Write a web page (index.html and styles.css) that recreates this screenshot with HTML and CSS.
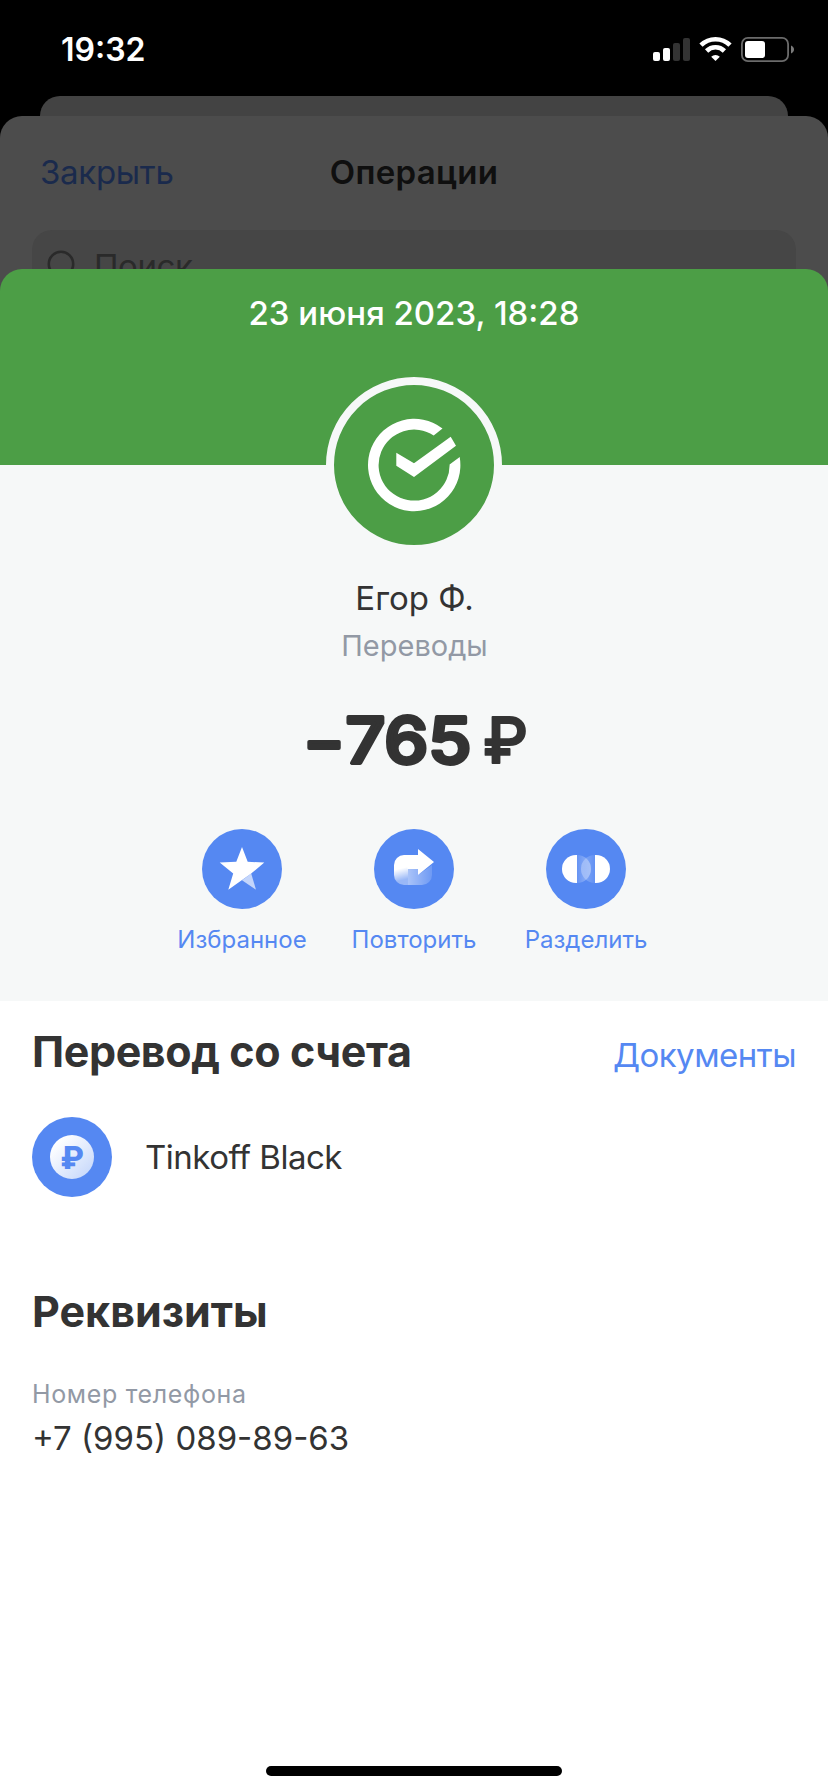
FILE: index.html
```html
<!DOCTYPE html>
<html lang="ru">
<head>
  <meta charset="UTF-8" />
  <meta name="viewport" content="width=device-width, initial-scale=1.0"/>
  <title>Операция</title>
  <link rel="stylesheet" href="styles.css">
</head>
<body>
  <div class="status-bar">
    <span class="time">19:32</span>
    <div class="status-icons">
      <svg width="37" height="26" viewBox="0 0 37 26" fill="#fff">
        <rect x="0" y="16" width="7" height="9" rx="2"/>
        <rect x="10" y="12" width="7" height="13" rx="2"/>
        <rect x="20" y="7" width="7" height="18" rx="2" fill="#333"/>
        <rect x="30" y="2" width="7" height="23" rx="2" fill="#333"/>
      </svg>
      <svg width="33" height="26" viewBox="0 0 33 26">
        <g fill="none" stroke="#fff" stroke-width="4.6">
          <path d="M2 9.2a20.5 20.5 0 0 1 29 0"/>
          <path d="M7.6 15a12.6 12.6 0 0 1 17.8 0"/>
        </g>
        <path d="M16.500 25l-4.300-4.300a6.200 6.200 0 0 1 8.600 0z" fill="#fff"/>
      </svg>
      <svg width="54" height="26" viewBox="0 0 54 26">
        <rect x=".9" y="1.900" width="46.200" height="23.200" rx="6" fill="none" stroke="#6b6b6b" stroke-width="1.800"/>
        <rect x="4" y="5" width="20" height="17" rx="3" fill="#fff"/>
        <path d="M50 9.500c4 1.500 4 6.500 0 8z" fill="#7a7a7a"/>
      </svg>
    </div>
  </div>

  <div class="back-card"></div>
  <div class="sheet">
    <div class="sheet-header">
      <span class="close">Закрыть</span>
      <span class="sheet-title">Операции</span>
      <span></span>
    </div>
    <div class="search">
      <svg width="34" height="34" viewBox="0 0 34 34" fill="none" stroke="#2a2a2a" stroke-width="2.600">
        <circle cx="14" cy="14" r="12.200"/>
        <path d="M23 23l9 9"/>
      </svg>
      <span class="search-text">Поиск</span>
    </div>
  </div>

  <div class="receipt">
    <div class="receipt-top">
      <div class="date">23 июня 2023, 18:28</div>
      <div class="logo">
        <svg width="160" height="160" viewBox="-80 -80 160 160" fill="#fff">
          <path d="M28.500-36.500A46.200 46.200 0 1 0 45.700-8L35.600-.5A35.500 35.500 0 1 1 19.700-29.500z"/>
          <path d="M-17.700-12.300L0-1.700 36.700-28.300 42-19.300 0 12-17.700.7z"/>
        </svg>
      </div>
    </div>

    <div class="summary">
      <div class="name">Егор Ф.</div>
      <div class="category">Переводы</div>
      <svg class="amount" width="240" height="80" viewBox="0 0 240 80">
        <text y="63"><tspan x="9">−</tspan><tspan x="51.500" textLength="126" lengthAdjust="spacingAndGlyphs">765</tspan> <tspan class="currency" x="189">₽</tspan></text>
      </svg>
      <div class="actions">
        <div class="action">
          <svg width="80" height="80" viewBox="-40 -40 80 80">
            <circle r="40" fill="#5588f2"/>
            <path d="M0 11.300L9.200 4.600 14 20.700z" fill="#fff" opacity=".65"/>
            <path d="M0-22L5.700-7.200 22.300-6.500 9.200 4.600 -13.700 20.700 -8.800 4.600 -22.300-6.500 -5.700-7.200z" fill="#fff"/>
          </svg>
          <span class="action-label">Избранное</span>
        </div>
        <div class="action">
          <svg width="80" height="80" viewBox="-40 -40 80 80">
            <defs>
              <linearGradient id="fade" x1="0" y1="0" x2=".12" y2="1">
                <stop offset=".5" stop-color="#fff"/>
                <stop offset=".9" stop-color="#fff" stop-opacity=".4"/>
              </linearGradient>
              <linearGradient id="tail">
                <stop offset="0" stop-color="#fff" stop-opacity=".5"/>
                <stop offset="1" stop-color="#fff" stop-opacity=".15"/>
              </linearGradient>
            </defs>
            <circle r="40" fill="#5588f2"/>
            <path d="M-6 0H4V6L18-4V6a10 10 0 0 1-10 10H-6z" fill="url(#tail)"/>
            <path d="M-6-14H-10A10 10 0 0 0-20-4V6A10 10 0 0 0-10 16H-6z" fill="url(#fade)"/>
            <path d="M-6.500-14H4V-20L20-7 4 6V0H-6.500z" fill="#fff"/>
          </svg>
          <span class="action-label">Повторить</span>
        </div>
        <div class="action">
          <svg width="80" height="80" viewBox="-40 -40 80 80">
            <defs>
              <linearGradient id="left">
                <stop offset="0" stop-color="#fff" stop-opacity=".1"/>
                <stop offset="1" stop-color="#fff" stop-opacity=".4"/>
              </linearGradient>
              <linearGradient id="right">
                <stop offset="0" stop-color="#fff" stop-opacity=".3"/>
                <stop offset="1" stop-color="#fff" stop-opacity=".08"/>
              </linearGradient>
            </defs>
            <circle r="40" fill="#5588f2"/>
            <path d="M-9-14A14 14 0 0 1-9 14z" fill="url(#left)"/>
            <path d="M9-14A14 14 0 0 0 9 14z" fill="url(#right)"/>
            <path d="M-9-14H-10A14 14 0 0 0-10 14H-9z" fill="#fff"/>
            <path d="M9-14H10A14 14 0 0 1 10 14H9z" fill="#fff"/>
          </svg>
          <span class="action-label">Разделить</span>
        </div>
      </div>
    </div>

    <div class="section">
      <div class="section-header">
        <h2>Перевод со счета</h2>
        <span class="documents">Документы</span>
      </div>
      <div class="account">
        <svg width="80" height="80" viewBox="-40 -40 80 80">
          <defs>
            <linearGradient id="coin" x1="0" y1="0" x2="1" y2="1">
              <stop offset=".15" stop-color="#fff"/>
              <stop offset=".9" stop-color="#c8d9fb"/>
            </linearGradient>
          </defs>
          <circle r="40" fill="#5588f2"/>
          <circle r="22" fill="url(#coin)"/>
          <text class="coin-sign" x="0" y="12">₽</text>
        </svg>
        <span class="account-name">Tinkoff Black</span>
      </div>
    </div>

    <div class="section details">
      <h2>Реквизиты</h2>
      <div class="field-label">Номер телефона</div>
      <div class="field-value">+7 (995) 089-89-63</div>
    </div>

    <div class="home-bar"></div>
  </div>
</body>
</html>
```
FILE: styles.css
```css
* {
  box-sizing: border-box;
}
body {
  margin: 0;
  height: 1792px;
  display: flex;
  flex-direction: column;
  background: #000;
  color: #333;
  font-family: Inter, "Liberation Sans", sans-serif;
  font-size: 33px;
  line-height: 44px;
  white-space: nowrap;
  overflow: hidden;
}
svg { display: block; }
h2 {
  margin: 0;
  font-size: 43px;
  line-height: 60px;
  font-weight: 700;
  letter-spacing: -0.4px;
}

.status-bar {
  height: 96px;
  padding: 0 33px 0 61px;
  display: flex;
  justify-content: space-between;
  align-items: flex-start;
}
.time {
  margin-top: 28px;
  color: #fff;
  font-size: 32px;
  font-weight: 600;
}
.status-icons {
  display: flex;
  gap: 9px;
  margin-top: 36px;
}

.back-card {
  height: 20px;
  margin: 0 40px;
  flex-shrink: 0;
  background: #434343;
  border-radius: 20px 20px 0 0;
}
.sheet {
  height: 183px;
  flex-shrink: 0;
  padding: 0 32px;
  overflow: hidden;
  background: #4c4c4c;
  border-radius: 22px 22px 0 0;
}
.sheet-header {
  height: 114px;
  padding: 0 8px 2px;
  display: grid;
  grid-template-columns: 1fr auto 1fr;
  align-items: center;
}
.close {
  color: #1a2a4c;
  letter-spacing: -0.3px;
}
.sheet-title {
  color: #0f0f0f;
  font-weight: 600;
  letter-spacing: 0.3px;
}
.search {
  height: 72px;
  padding: 1px 15px 0;
  display: flex;
  align-items: center;
  gap: 13px;
  background: #464646;
  border-radius: 20px;
  color: #2a2a2a;
}
.search-text {
  margin-top: -1px;
  letter-spacing: -0.4px;
}

.receipt {
  position: relative;
  flex: 1;
  margin-top: -30px;
  display: flex;
  flex-direction: column;
  background: #fff;
  border-radius: 34px 34px 0 0;
}
.receipt-top {
  position: relative;
  z-index: 1;
  height: 196px;
  display: flex;
  flex-direction: column;
  align-items: center;
  background: #4c9e46;
  border-radius: 22px 22px 0 0;
}
.date {
  line-height: 88px;
  color: #fff;
  font-weight: 500;
}
.logo {
  width: 176px;
  height: 176px;
  flex-shrink: 0;
  margin-top: 20px;
  border: 8px solid #f6f8f8;
  border-radius: 50%;
  background: #4c9e46;
}
.summary {
  height: 536px;
  padding-top: 111px;
  display: flex;
  flex-direction: column;
  align-items: center;
  background: #f6f8f8;
}
.name { padding-left: 1px; }
.category {
  margin-top: 7px;
  padding-left: 1px;
  font-size: 29px;
  line-height: 37px;
  color: #9299a5;
}
.amount { margin-top: 36px; }
.amount text {
  font-size: 63px;
  font-weight: 500;
  fill: #333;
  stroke: #333;
  stroke-width: 3.8px;
  stroke-linejoin: round;
}
.amount .currency {
  font-weight: 500;
  stroke-width: 1.8px;
}
.actions {
  display: grid;
  grid-template-columns: repeat(3, 172px);
  margin-top: 49px;
}
.action {
  display: flex;
  flex-direction: column;
  align-items: center;
}
.action-label {
  margin-top: 16px;
  font-size: 24px;
  line-height: 30px;
  color: #5588f2;
}

.section {
  padding: 20px 32px 0;
}
.section-header {
  display: flex;
  justify-content: space-between;
  align-items: baseline;
}
.documents {
  color: #5588f2;
  letter-spacing: -0.5px;
}
.account {
  margin-top: 36px;
  display: flex;
  align-items: center;
  gap: 33px;
}
.account-name {
  letter-spacing: -0.5px;
  font-feature-settings: "calt" 0, "liga" 0;
}
.coin-sign {
  font-size: 31px;
  font-weight: 800;
  text-anchor: middle;
  fill: #5588f2;
}
.details { padding-top: 84px; }
.details h2 { letter-spacing: 0; }
.field-label {
  margin-top: 38px;
  font-size: 25px;
  line-height: 30px;
  letter-spacing: 0.65px;
  color: #9299a5;
}
.field-value { margin-top: 7px; }

.home-bar {
  width: 296px;
  height: 10px;
  margin: auto auto 16px;
  border-radius: 5px;
  background: #000;
}
```
